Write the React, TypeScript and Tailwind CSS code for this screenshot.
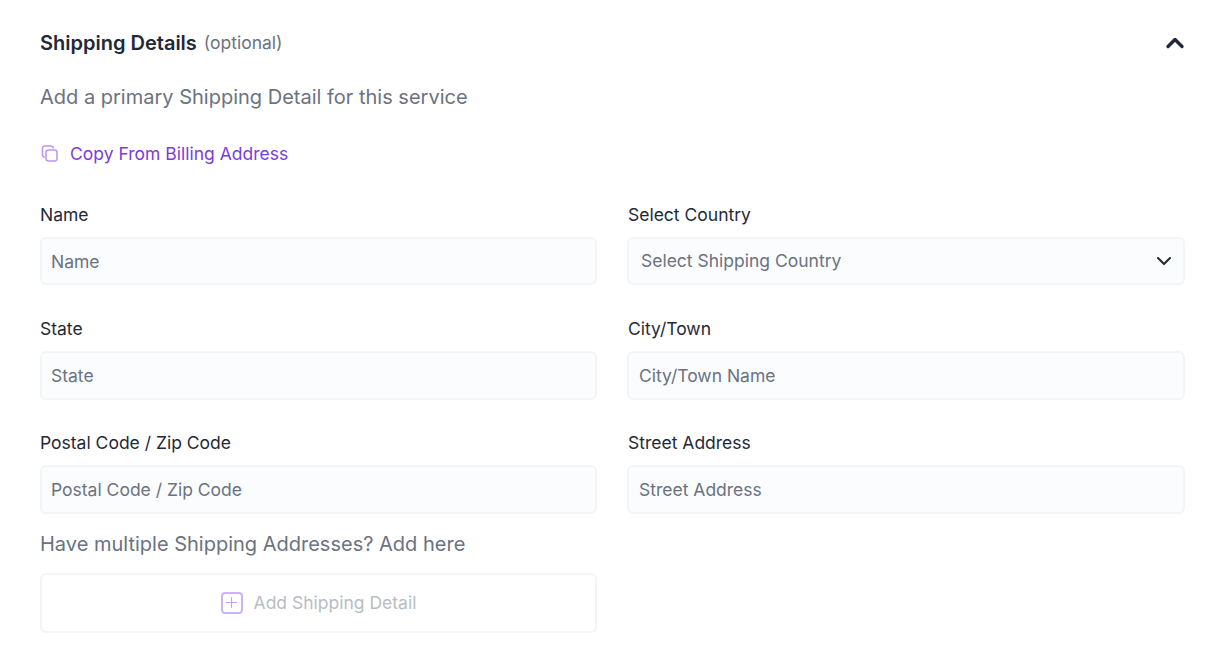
import { ChevronDown, ChevronUp, Plus } from "lucide-react"

function Field({ label, placeholder, inset }: { label: string; placeholder: string; inset?: boolean }) {
  return (
    <div>
      <label className={inset ? "block pl-[1px] text-[17.5px] leading-6 text-[#1f2937] mb-[10px]" : "block text-[17.5px] leading-6 text-[#1f2937] mb-[10px]"}>{label}</label>
      <input
        type="text"
        placeholder={placeholder}
        className={inset ? "w-full h-[48.4px] pl-[10px] pr-[9px] rounded-md border-2 border-[#f3f4f6] bg-[#fafcfe] text-[17.5px] outline-none placeholder:text-[#6b7280]" : "w-full h-[48.4px] px-[9px] rounded-md border-2 border-[#f3f4f6] bg-[#fafcfe] text-[17.5px] outline-none placeholder:text-[#6b7280]"}
      />
    </div>
  )
}

export default function App() {
  return (
    <div className="w-[1224px] h-[652px] bg-white px-[40px] pt-[29px] overflow-hidden font-['Inter',sans-serif]">
      {/* Header */}
      <div className="w-[1145px] flex items-center justify-between h-[28px]">
        <div className="flex items-center gap-[7px]">
          <h2 className="text-[20px] font-semibold text-[#1f2937]">Shipping Details</h2>
          <span className="text-[17.5px] text-[#6b7280]">(optional)</span>
        </div>
        <ChevronUp className="h-7 w-7 -mr-[4px] text-[#1f2937]" strokeWidth={2.9} />
      </div>

      <p className="mt-[26px] text-[20px] leading-7 text-[#6b7280]">Add a primary Shipping Detail for this service</p>

      <button className="mt-[31px] flex items-center gap-[12px] text-[17.5px] leading-6 text-[#7e3bdc]">
        <svg width="18" height="18" viewBox="0 0 18 18" fill="none" stroke="#bb95f0" strokeWidth="1.5">
          <rect x="6" y="5" width="11" height="11" rx="2.4" />
          <path d="M13.600 3.400c-.3-1.500-1.300-2.400-2.900-2.400H5C3.300 1 2.400 2 2.400 3.700v5.700c0 1.600.9 2.600 2.400 2.900" />
        </svg>
        Copy From Billing Address
      </button>

      {/* Form */}
      <div className="mt-[37px] w-[1145px] grid grid-cols-[557px_558px] gap-x-[30px] gap-y-[31.84px]">
        <Field label="Name" placeholder="Name" />
        <div>
          <label className="block pl-[1px] text-[17.5px] leading-6 text-[#1f2937] mb-[10px]">Select Country</label>
          <div className="h-[48.4px] pl-[12px] pr-[7px] rounded-md border-2 border-[#f3f4f6] bg-[#fafcfe] flex items-center justify-between text-[17.5px] text-[#6b7280]">
            Select Shipping Country
            <ChevronDown className="h-6 w-6 text-[#1f2937]" />
          </div>
        </div>
        <Field label="State" placeholder="State" />
        <Field inset label="City/Town" placeholder="City/Town Name" />
        <Field label="Postal Code / Zip Code" placeholder="Postal Code / Zip Code" />
        <Field inset label="Street Address" placeholder="Street Address" />
      </div>

      <p className="mt-[16px] text-[20px] leading-7 text-[#6b7280]">Have multiple Shipping Addresses? Add here</p>

      <button className="mt-[15px] w-[557px] h-[60px] rounded-md border-2 border-[#f3f4f6] bg-white flex items-center justify-center gap-[11px] text-[17.5px] text-[#b9bcc2]">
        <span className="h-[22px] w-[22px] rounded-[4px] border-2 border-[#cdb3f5] flex items-center justify-center">
          <Plus className="h-[17px] w-[17px] text-[#c4a1f5]" strokeWidth={1.5} />
        </span>
        Add Shipping Detail
      </button>
    </div>
  )
}
